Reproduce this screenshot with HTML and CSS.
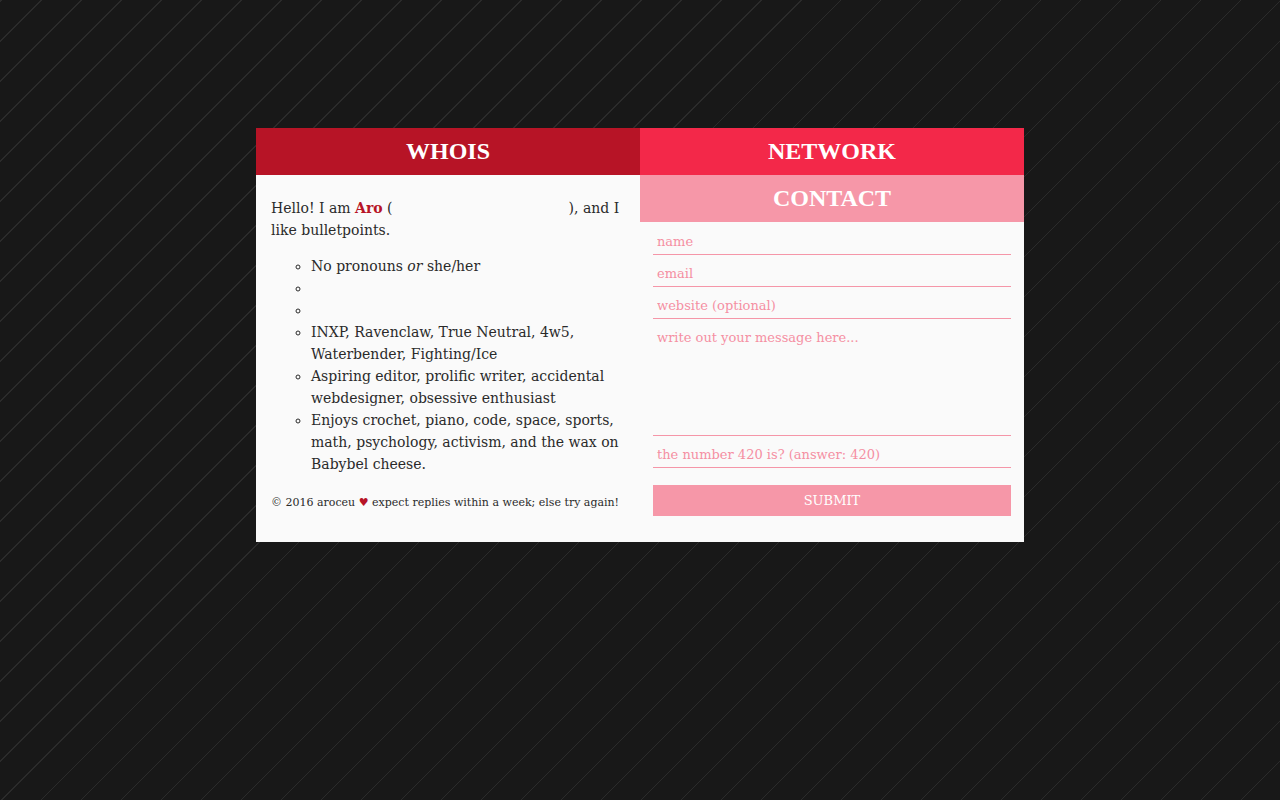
FILE: index.html
```html
<!DOCTYPE html>
<html>
<head>
<meta charset="utf-8">
<link rel="stylesheet" href="styles.css">
</head>
<body>
<div class="wrap">
  <div class="panel">
    <section class="col left">
      <h2 class="bar whois">WHOIS</h2>
      <div class="about">
        <p class="intro">Hello! I am <b class="name">Aro</b> (<span class="redact"></span>), and I like bulletpoints.</p>
        <ul class="facts">
          <li>No pronouns <i>or</i> she/her</li>
          <li></li>
          <li></li>
          <li>INXP, Ravenclaw, True Neutral, 4w5, Waterbender, Fighting/Ice</li>
          <li>Aspiring editor, prolific writer, accidental webdesigner, obsessive enthusiast</li>
          <li>Enjoys crochet, piano, code, space, sports, math, psychology, activism, and the wax on Babybel cheese.</li>
        </ul>
        <p class="foot">© 2016 aroceu <span class="heart">♥</span> expect replies within a week; else try again!</p>
      </div>
    </section>
    <section class="col right">
      <h2 class="bar network">NETWORK</h2>
      <h2 class="bar contact">CONTACT</h2>
      <form class="form">
        <input class="field" type="text" placeholder="name">
        <input class="field" type="text" placeholder="email">
        <input class="field" type="text" placeholder="website (optional)">
        <textarea class="field msg" placeholder="write out your message here..."></textarea>
        <input class="field" type="text" placeholder="the number 420 is? (answer: 420)">
        <button class="submit" type="button">SUBMIT</button>
      </form>
    </section>
  </div>
</div>
</body>
</html>
```
FILE: styles.css
```css
html, body {
  margin: 0;
  height: 100%;
}
body {
  background-color: #181818;
  background-image: repeating-linear-gradient(-45deg, transparent 0, transparent 27px, #2b2b2b 27px, #2b2b2b 28.28px);
  font-family: "DejaVu Serif", "Liberation Serif", serif;
  color: #2a2a2a;
}
.wrap {
  padding-top: 128px;
  display: flex;
  justify-content: center;
}
.panel {
  width: 768px;
  display: flex;
  background: #fafafa;
}
.col {
  width: 384px;
  display: flex;
  flex-direction: column;
}
.bar {
  margin: 0;
  height: 47px;
  line-height: 47px;
  text-align: center;
  color: #fff;
  font-weight: bold;
  font-size: 24px;
  font-family: "Liberation Serif", serif;
}
.whois { background: #b71426; }
.network { background: #f32849; }
.contact { background: #f697a8; }
.about {
  padding: 22px 15px 24px;
  font-size: 14px;
  line-height: 22px;
}
.intro { margin: 0; }
.name { color: #b71426; }
.redact {
  display: inline-block;
  width: 176px;
}
.facts {
  margin: 14px 0 0;
  padding-left: 40px;
  list-style: circle;
}
.facts li { min-height: 22px; }
.foot {
  margin: 19px 0 0;
  font-size: 11px;
  line-height: 18px;
  white-space: nowrap;
}
.heart { color: #b71426; }
.form {
  padding: 1px 13px 26px;
  display: flex;
  flex-direction: column;
}
.field {
  border: 0;
  border-bottom: 1px solid #f596a8;
  background: transparent;
  font-family: "DejaVu Serif", serif;
  font-size: 13px;
  height: 32px;
  padding: 8px 4px 3px;
  box-sizing: border-box;
  color: #f48ba0;
  outline: none;
}
.field::placeholder { color: #f58fa2; }
.msg {
  height: 117px;
  resize: none;
  padding-top: 11px;
}
.submit {
  margin-top: 17px;
  height: 31px;
  border: 0;
  background: #f697a8;
  color: #fff;
  font-family: "DejaVu Serif", serif;
  font-size: 13px;
}
```
